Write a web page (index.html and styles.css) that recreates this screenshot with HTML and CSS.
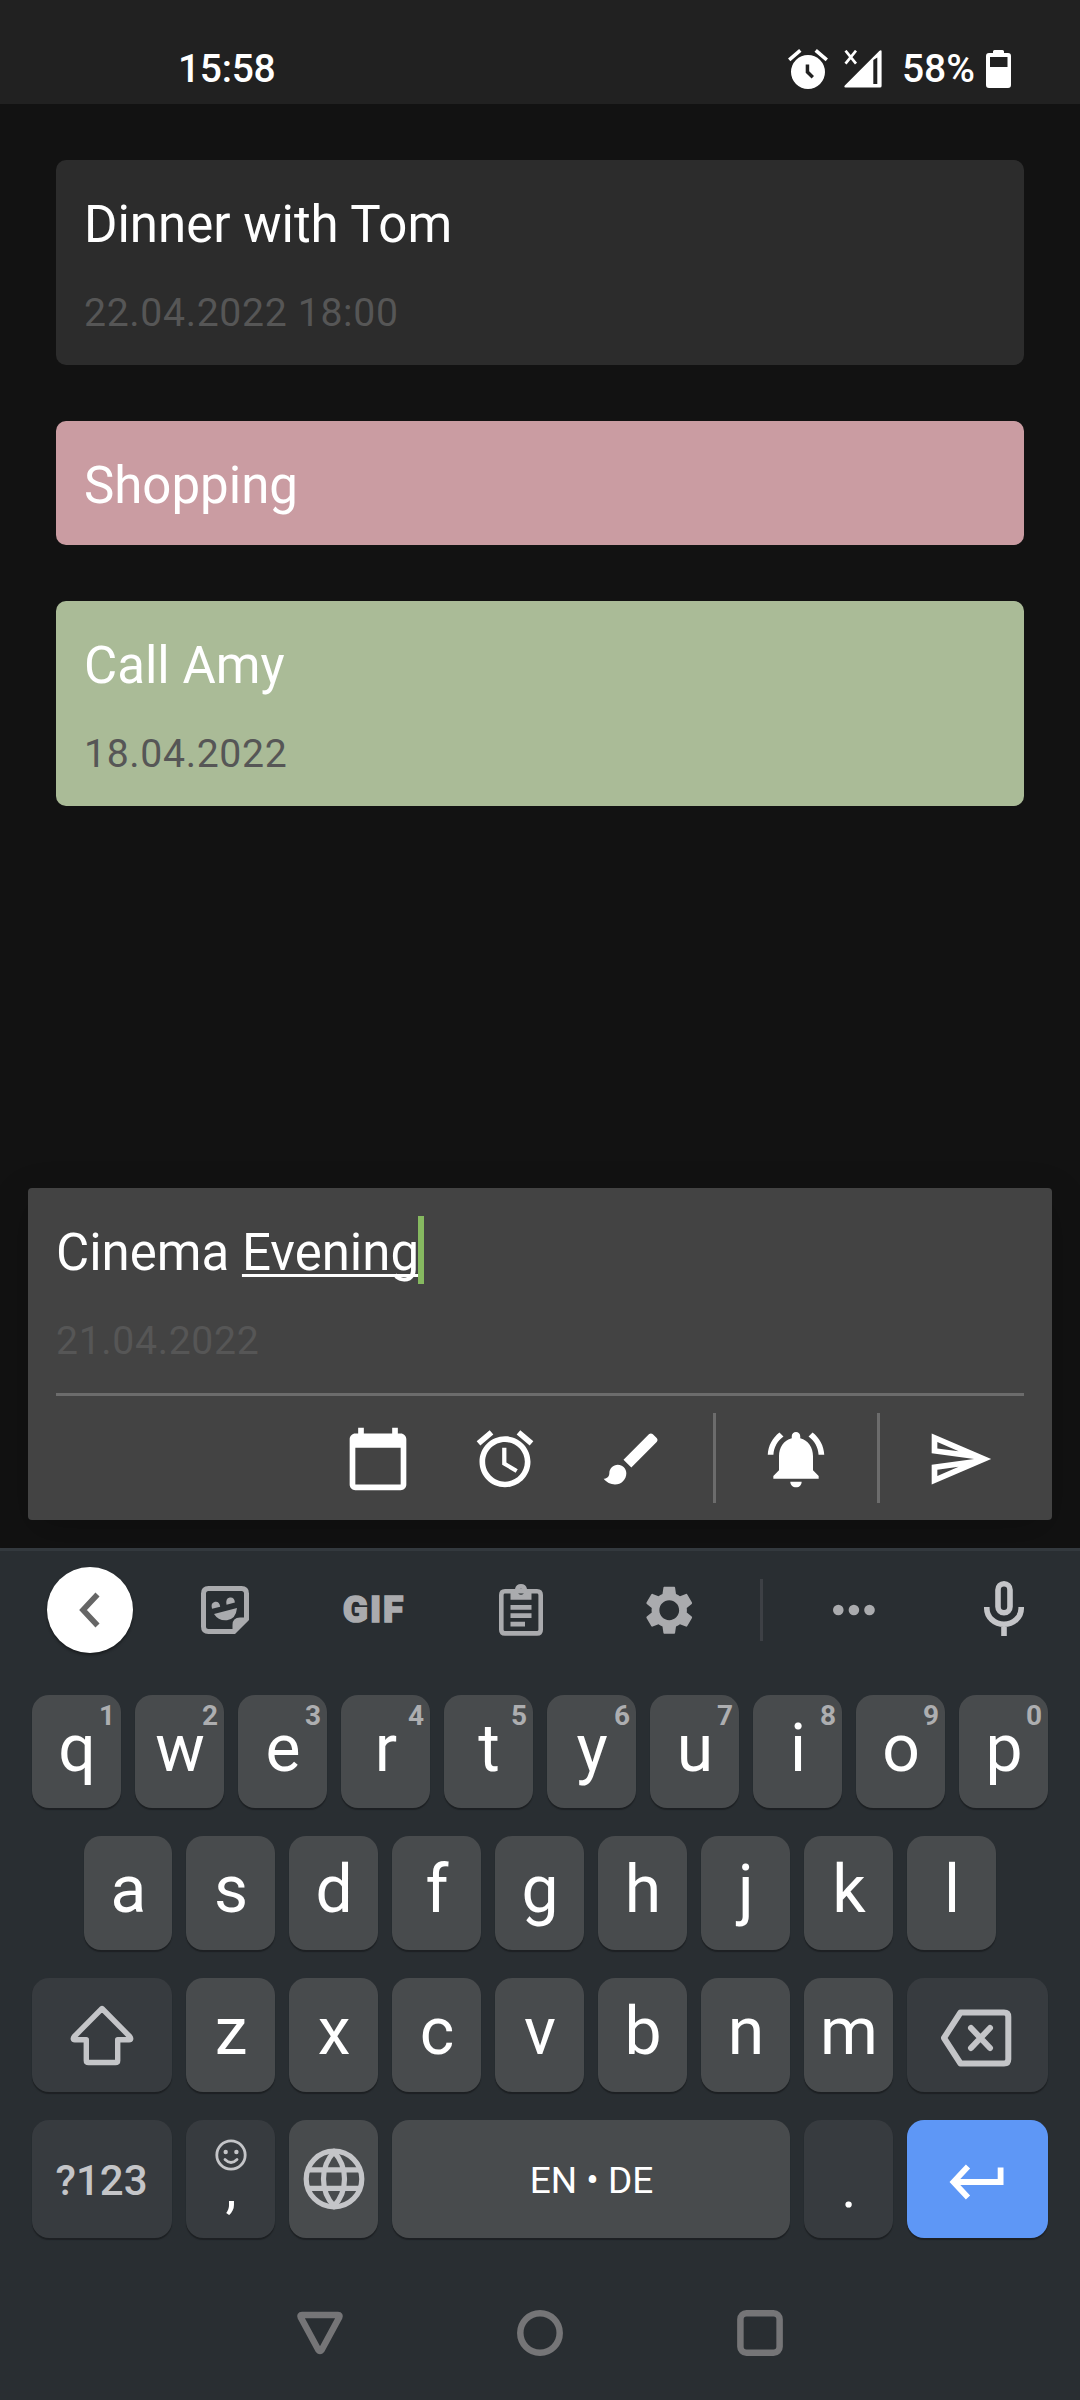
FILE: index.html
```html
<!DOCTYPE html>
<html lang="en">
<head>
<meta charset="utf-8">
<title>Notes</title>
<link rel="stylesheet" href="styles.css">
</head>
<body>
<div class="screen">
  <header class="status">
    <span class="clock">15:58</span>
    <div class="indicators">
      <svg class="ind-alarm" width="40" height="40" viewBox="0 0 40 40"><path fill="#fff" fill-rule="evenodd" d="M20 6a17 17 0 1 0 0 34a17 17 0 1 0 0-34zM17.700 15.500h3.500v6.800l4.800 4.600-2.400 2.500-5.900-5.700z"/><path d="M1.200 10.800L12.300 1.400M38.800 10.800L27.700 1.400" stroke="#fff" stroke-width="3.600"/></svg>
      <svg class="ind-signal" width="38" height="38" viewBox="0 0 38 38"><path fill="#fff" fill-rule="evenodd" d="M35.500.8Q37.600-.4 37.600 1.500V36Q37.600 37.600 36 37.600H1.500Q-.4 37.600.8 35.600zM29.300 10v24h4V7.500z"/><path d="M1.500.7L12 13.700M12 .7L1.500 13.700" stroke="#fff" stroke-width="2.700"/></svg>
      <span class="percent">58%</span>
      <svg class="ind-battery" width="25" height="38" viewBox="0 0 25 38"><path fill="#fff" fill-rule="evenodd" d="M8.500 0h8q1.500 0 1.500 1.500V3h4q3 0 3 3v29q0 3-3 3H3q-3 0-3-3V6q0-3 3-3h4V1.500Q7 0 8.500 0zM4 7v10h17.500V7z"/></svg>
    </div>
  </header>

  <main class="board">
    <article class="note"><h2 class="title">Dinner with Tom</h2><p class="date">22.04.2022 18:00</p></article>
    <article class="note note-pink"><h2 class="title">Shopping</h2></article>
    <article class="note note-green"><h2 class="title">Call Amy</h2><p class="date">18.04.2022</p></article>
  </main>

  <section class="composer">
    <div class="title entry">Cinema <u class="composing">Evening</u><i class="caret"></i></div>
    <p class="date">21.04.2022</p>
    <div class="tools">
      <span class="tool"><svg width="68" height="68" viewBox="0 0 24 24"><path d="M20 3h-1V1h-2v2H7V1H5v2H4c-1.100 0-2 .9-2 2v16c0 1.100.9 2 2 2h16c1.100 0 2-.9 2-2V5c0-1.100-.9-2-2-2zm0 18H4V8h16v13z"/></svg></span>
      <span class="tool"><svg width="68" height="68" viewBox="0 0 24 24"><path d="M22 5.720l-4.600-3.860-1.290 1.530 4.600 3.860L22 5.720zM7.880 3.390L6.600 1.860 2 5.710l1.290 1.530 4.590-3.850zM12.500 8H11v6l4.750 2.850.75-1.230-4-2.370V8zM12 4c-4.970 0-9 4.030-9 9s4.020 9 9 9c4.970 0 9-4.030 9-9s-4.030-9-9-9zm0 16c-3.870 0-7-3.130-7-7s3.130-7 7-7 7 3.130 7 7-3.130 7-7 7z"/></svg></span>
      <span class="tool"><svg width="68" height="68" viewBox="0 0 24 24"><path d="M7 14c-1.660 0-3 1.340-3 3 0 1.310-1.160 2-2 2 .92 1.220 2.490 2 4 2 2.210 0 4-1.790 4-4 0-1.660-1.340-3-3-3zm13.710-9.370l-1.340-1.340c-.39-.39-1.020-.39-1.410 0L9 12.250 11.750 15l8.960-8.960c.39-.39.39-1.020 0-1.410z"/></svg></span>
      <span class="rule"></span>
      <span class="tool"><svg width="68" height="68" viewBox="0 0 24 24"><path d="M7.580 4.080L6.150 2.650C3.750 4.480 2.170 7.300 2.030 10.500h2c.15-2.650 1.510-4.970 3.550-6.420zm12.390 6.420h2c-.15-3.200-1.730-6.020-4.120-7.850l-1.420 1.430c2.020 1.450 3.390 3.770 3.540 6.420zM18 11c0-3.070-1.640-5.640-4.500-6.320V4c0-.83-.67-1.500-1.500-1.500s-1.500.67-1.500 1.500v.68C7.630 5.360 6 7.920 6 11v5l-2 2v1h16v-1l-2-2v-5zm-6 11c.14 0 .27-.01.4-.04.65-.14 1.180-.58 1.440-1.180.1-.24.15-.5.15-.78h-4c.01 1.100.9 2 2.010 2z"/></svg></span>
      <span class="rule"></span>
      <span class="tool"><svg width="68" height="68" viewBox="0 0 24 24"><path d="M4.010 6.030l7.510 3.220-7.520-1 .01-2.220m7.500 8.720L4 17.970v-2.220l7.510-1M2.010 3L2 10l15 2-15 2 .01 7L23 12 2.010 3z"/></svg></span>
    </div>
  </section>

  <section class="keyboard">
    <div class="strip">
      <span class="back"><svg width="22" height="36" viewBox="0 0 22 36"><path d="M18.500 2.500L4 18L18.500 33.500" fill="none" stroke="#666" stroke-width="5.600"/></svg></span>
      <svg width="48" height="48" viewBox="0 0 48 48"><path fill="none" stroke="#aaabae" stroke-width="5" d="M7.500 2.500h33q5 0 5 5v25.500L33 45.500H7.500q-5 0-5-5v-33q0-5 5-5z"/><path fill="#aaabae" d="M31.500 46v-7q0-7.500 7.500-7.500h8v3L34 47zM13 28l23-6q-1 11-10 12.200Q17.500 35 13 28zM11 22.800q-1.700-5.800 3-7q4.300-.8 5.200 5zM25.500 18.800q-1.200-6.300 3.200-7.300 4.600-.8 5.200 5z"/></svg>
      <span class="gif">GIF</span>
      <svg width="44" height="52" viewBox="0 0 44 52"><path fill="none" stroke="#aaabae" stroke-width="4.600" d="M6 7.300h32q3.700 0 3.700 3.700v34.700q0 3.700-3.700 3.700H6q-3.700 0-3.700-3.700V11q0-3.700 3.700-3.700z"/><path fill="#aaabae" fill-rule="evenodd" d="M11.500 5h4.500q1-5 6-5t6 5h4.500v10.700h-21zM22 4.700a3 3 0 1 0 0 6a3 3 0 1 0 0-6z"/><path d="M11.500 23.400H32.500M11.500 31.700H32.500M11.500 40.200H26" stroke="#aaabae" stroke-width="4.700"/></svg>
      <svg width="56.500" height="56.500" viewBox="0 0 24 24"><path fill="#aaabae" fill-rule="evenodd" d="M19.430 12.980c.04-.32.07-.64.07-.98s-.03-.66-.07-.98l2.110-1.650c.19-.15.24-.42.12-.64l-2-3.460c-.12-.22-.39-.3-.61-.22l-2.490 1c-.52-.4-1.080-.73-1.690-.98l-.38-2.650C14.460 2.180 14.250 2 14 2h-4c-.25 0-.46.18-.49.42l-.38 2.650c-.61.25-1.170.59-1.690.98l-2.490-1c-.23-.09-.49 0-.61.220l-2 3.460c-.13.22-.07.49.12.64l2.110 1.650c-.04.32-.07.65-.07.98s.03.66.07.98l-2.110 1.650c-.19.15-.24.42-.12.64l2 3.460c.12.22.39.3.61.220l2.490-1c.52.4 1.080.73 1.690.98l.38 2.650c.03.24.24.42.49.42h4c.25 0 .46-.18.49-.42l.38-2.650c.61-.25 1.170-.59 1.690-.98l2.490 1c.23.09.49 0 .61-.22l2-3.460c.12-.22.07-.49-.12-.64l-2.110-1.650zM12 16.200c-2.320 0-4.200-1.880-4.200-4.200s1.880-4.200 4.200-4.200 4.200 1.880 4.200 4.200-1.880 4.200-4.200 4.200z"/></svg>
      <span class="strip-rule"></span>
      <svg width="44" height="12" viewBox="0 0 44 12"><g fill="#aaabae"><circle cx="6.300" cy="6" r="5.300"/><circle cx="21.900" cy="6" r="5.300"/><circle cx="37.500" cy="6" r="5.300"/></g></svg>
      <svg class="mic" width="40" height="55" viewBox="0 0 40 55"><g fill="none" stroke="#c4c5c8" stroke-width="5.600"><rect x="14" y="2.800" width="12" height="29" rx="6"/><path d="M2.800 26v1.500a17.200 15.800 0 0 0 34.400 0V26M20 43.500V55"/></g></svg>
    </div>

    <div class="row row-top">
      <span class="key">q<b>1</b></span><span class="key">w<b>2</b></span><span class="key">e<b>3</b></span><span class="key">r<b>4</b></span><span class="key">t<b>5</b></span><span class="key">y<b>6</b></span><span class="key">u<b>7</b></span><span class="key">i<b>8</b></span><span class="key">o<b>9</b></span><span class="key">p<b>0</b></span>
    </div>
    <div class="row row-home">
      <span class="key narrow">a</span><span class="key">s</span><span class="key">d</span><span class="key">f</span><span class="key">g</span><span class="key">h</span><span class="key">j</span><span class="key">k</span><span class="key">l</span>
    </div>
    <div class="row">
      <span class="key wide dim"><svg width="64" height="62" viewBox="0 0 64 62"><path fill="none" stroke="#c4c5c8" stroke-width="5.400" stroke-linejoin="round" d="M32 4.500L4.300 32.500Q2 35.500 5 35.700H16.300V56.500Q16.300 58.500 18.500 58.500H45.500Q47.700 58.500 47.700 56.500V35.700H59Q62 35.500 59.700 32.500z"/></svg></span>
      <span class="key">z</span><span class="key">x</span><span class="key">c</span><span class="key">v</span><span class="key">b</span><span class="key">n</span><span class="key">m</span>
      <span class="key wide end dim"><svg class="erase" width="72" height="58" viewBox="0 0 72 58"><path fill="none" stroke="#c4c5c8" stroke-width="6" stroke-linejoin="round" d="M20.500 3.500H64Q68.300 3.500 68.300 7.800V50.200Q68.300 54.500 64 54.500H20.500L4 29z"/><path d="M31 19L50 39M50 19L31 39" stroke="#c4c5c8" stroke-width="6" stroke-linecap="round"/></svg></span>
    </div>
    <div class="row row-bottom">
      <span class="key wide dim symbols">?123</span>
      <span class="key dim punct">,<svg class="smile" width="32" height="32" viewBox="0 0 32 32"><g fill="none" stroke="#c4c5c8" stroke-width="2.800"><circle cx="16" cy="16" r="14.200"/><path d="M10 20.500q6 6 12 0" stroke-linecap="round"/></g><circle cx="10.700" cy="13" r="2.200" fill="#c4c5c8"/><circle cx="21.400" cy="13" r="2.200" fill="#c4c5c8"/></svg></span>
      <span class="key"><svg width="62" height="62" viewBox="0 0 62 62"><g fill="none" stroke="#c4c5c8" stroke-width="5.200"><circle cx="31" cy="31" r="27.800"/><path d="M5 21.800H57M5 40.300H57M31 4Q20.500 15 20.500 31T31 58Q41.500 47 41.500 31T31 4z"/></g></svg></span>
      <span class="key space">EN • DE</span>
      <span class="key dim punct">.</span>
      <span class="key wide end enter"><svg width="55" height="36" viewBox="0 0 55 36"><path fill="none" stroke="#fff" stroke-width="5.800" d="M19 2.500L4.500 18L19 33.500M5 18H51.600V3.500"/></svg></span>
    </div>

    <nav class="nav">
      <svg width="48" height="44" viewBox="0 0 48 44"><path fill="none" stroke="#757577" stroke-width="6.500" stroke-linejoin="round" d="M6 4H42Q44.300 4 43.300 6.300L25.600 39Q24 41 22.400 39L4.700 6.300Q3.700 4 6 4z"/></svg>
      <svg width="48" height="48" viewBox="0 0 48 48"><circle cx="24" cy="24" r="19.700" fill="none" stroke="#757577" stroke-width="6.500"/></svg>
      <svg width="48" height="48" viewBox="0 0 48 48"><rect x="4.400" y="4.300" width="39.200" height="39.400" rx="6" fill="none" stroke="#757577" stroke-width="6.500"/></svg>
    </nav>
  </section>
</div>
</body>
</html>
```
FILE: styles.css
```css
* { box-sizing: border-box; }
body { margin: 0; background: #111; font-family: Roboto, "Liberation Sans", sans-serif; color: #fff; }
svg { display: block; flex: none; }
.screen { width: 1080px; height: 2400px; display: flex; flex-direction: column; overflow: hidden; background: #121212; }

.status { height: 104px; flex: none; background: #212121; display: flex; justify-content: space-between; padding: 45px 69px 0 178px; }
.clock, .percent { font-size: 39px; font-weight: 500; line-height: 48px; }
.clock { letter-spacing: -.3px; }
.indicators { display: flex; align-items: flex-start; }
.ind-alarm { margin: 4px 16px 0 0; }
.ind-signal { margin: 5px 20px 0 0; }
.ind-battery { margin: 5px 0 0 11px; }

.board { flex: 1; padding: 56px; display: flex; flex-direction: column; gap: 56px; }
.note { background: #2c2c2c; border-radius: 10px; padding: 28px; display: flex; flex-direction: column; gap: 28px; }
.note-pink { background: #ca9ca2; }
.note-green { background: #aabb97; }
.title { margin: 0; font-size: 51px; line-height: 68px; height: 68px; font-weight: 400; white-space: pre; padding-top: 3px; }
.date { margin: 0; font-size: 39.200px; line-height: 53px; height: 53px; letter-spacing: .65px; color: #565656; padding-top: 3px; }

.composer { flex: none; margin: 0 28px 28px; height: 332px; background: #434343; border-radius: 4px; padding: 28px 28px 0; display: flex; flex-direction: column; gap: 28px; box-shadow: 0 12px 40px rgba(0, 0, 0, .2); }
.entry { display: flex; }
.composing { text-decoration: underline 3px; text-underline-offset: 4px; text-decoration-skip-ink: none; }
.caret { width: 6px; height: 68px; margin: -3px 0 0 -1px; background: #86b960; }
.tools { height: 127px; border-top: 3px solid #6c6c6c; display: flex; justify-content: flex-end; align-items: center; }
.tool { width: 127px; display: flex; justify-content: center; fill: #fff; padding: 1px 2px 0 0; }
.rule { width: 3px; height: 90px; margin: 0 17px; background: #6c6c6c; }

.keyboard { flex: none; height: 852px; position: relative; background: #292e32; border-top: 3px solid #33393e; display: flex; flex-direction: column; }
.strip { height: 118px; margin-bottom: 26px; padding-left: 31px; display: grid; grid-template-columns: 118px 152px 146px 148px 148px 37px 147px 153px; align-items: center; justify-items: center; }
.back { width: 86px; height: 86px; border-radius: 50%; background: #fff; display: flex; align-items: center; justify-content: center; box-shadow: 0 2px 3px rgba(0, 0, 0, .4); }
.gif { font-size: 37px; font-weight: 900; line-height: 44px; letter-spacing: 2px; color: #aaabae; -webkit-text-stroke: 1.500px #aaabae; }
.strip-rule { width: 3px; height: 62px; background: #3d4045; }
.mic { margin-top: -3px; }

.row { display: flex; gap: 14px; height: 114px; margin: 0 32px 28px; }
.row-top { height: 113px; }
.row-home { margin: 0 84px 28px; }
.row-bottom { height: 118px; margin-bottom: 0; }
.key { position: relative; flex: 1 1 0; min-width: 0; display: flex; justify-content: center; align-items: center; font-size: 66px; line-height: 107px; padding: 0 0 7px 1px; background: #484b4d; border-radius: 17px; box-shadow: 0 2px 1px #1d2023; }
.key b { position: absolute; top: 0; right: 6px; font-size: 28px; line-height: 41px; color: #adaeb0; }
.narrow { flex: 0 0 88px; }
.wide { flex: 0 0 140px; padding: 0 1px 0 0; }
.end { flex-basis: 141px; padding-right: 3px; }
.dim { background: #373b3f; }
.erase { margin-top: 5px; }
.row-bottom .key { padding-bottom: 0; }
.symbols { font-size: 42px; font-weight: 500; color: #c4c5c8; padding-top: 3px; }
.punct { font-size: 56px; padding-top: 18px; }
.smile { position: absolute; left: 28.500px; top: 19px; }
.space { flex: 0 0 398px; font-size: 37px; padding-top: 2px; }
.enter { background: #5e97f6; padding-top: 6px; }

.nav { flex: 1; display: flex; justify-content: center; align-items: center; gap: 172px; padding-top: 28px; }
```
